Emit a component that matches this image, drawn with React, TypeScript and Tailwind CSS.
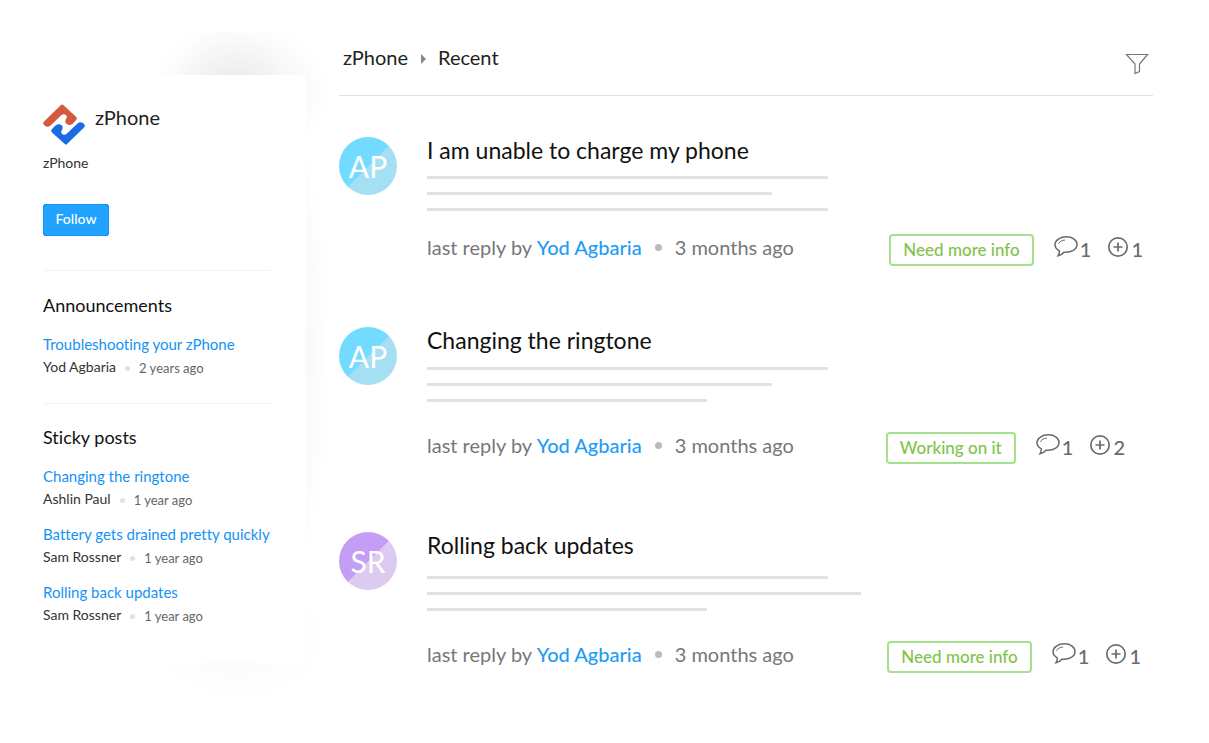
import React from 'react';

interface Post {
  title: string;
  author: string;
  time: string;
}

interface Topic {
  title: string;
  initials: string;
  tone: 'blue' | 'purple';
  lines: string[];
  status: string;
  replies: number;
  votes: number;
  spacing: string;
  lineSpacing: string;
  metaSpacing: string;
  statsSpacing: string;
}

const announcements: Post[] = [
  { title: 'Troubleshooting your zPhone', author: 'Yod Agbaria', time: '2 years ago' },
];

const stickyPosts: Post[] = [
  { title: 'Changing the ringtone', author: 'Ashlin Paul', time: '1 year ago' },
  { title: 'Battery gets drained pretty quickly', author: 'Sam Rossner', time: '1 year ago' },
  { title: 'Rolling back updates', author: 'Sam Rossner', time: '1 year ago' },
];

const topics: Topic[] = [
  {
    title: 'I am unable to charge my phone',
    initials: 'AP',
    tone: 'blue',
    lines: ['w-[401px]', 'w-[345px]', 'w-[401px]'],
    status: 'Need more info',
    replies: 1,
    votes: 1,
    spacing: 'pt-[41px]',
    lineSpacing: 'mt-[13px]',
    metaSpacing: 'mt-[17px]',
    statsSpacing: 'pr-2.5',
  },
  {
    title: 'Changing the ringtone',
    initials: 'AP',
    tone: 'blue',
    lines: ['w-[401px]', 'w-[345px]', 'w-[280px]'],
    status: 'Working on it',
    replies: 1,
    votes: 2,
    spacing: 'pt-[61px]',
    lineSpacing: 'mt-3.5',
    metaSpacing: 'mt-6',
    statsSpacing: 'pr-7',
  },
  {
    title: 'Rolling back updates',
    initials: 'SR',
    tone: 'purple',
    lines: ['w-[401px]', 'w-[434px]', 'w-[280px]'],
    status: 'Need more info',
    replies: 1,
    votes: 1,
    spacing: 'pt-[68px]',
    lineSpacing: 'mt-[18px]',
    metaSpacing: 'mt-6',
    statsSpacing: 'pr-3',
  },
];

const Logo = () => (
  <svg className="h-[42px] w-[42px]" viewBox="0 0 42 42" aria-hidden="true">
    <path
      d="M20 .8 33 12.8Q34.600 14.500 33 16.200L29.500 20Q26 22 23 19.500Q21.500 17 23.500 14Q24.500 11.500 22 10.500Q20 9.500 18 11.500L7.500 21.500Q4.500 24 1.500 21.500Q-.8 19.500 1 17.500L18 1Q19 .2 20 .8Z"
      fill="#d45a3d"
    />
    <path
      d="M22 40.200 9 28.500Q7.400 26.800 9 25L12.500 21.500Q16 19 19 21.500Q20.500 24 18.500 27Q17.500 29.500 20 30.500Q22 31.500 24 29.500L34.500 19.500Q37.500 17 40.500 19.500Q42.800 21.500 41 23.500L24 40Q23 41 22 40.200Z"
      fill="#1b6be5"
    />
  </svg>
);

const FilterIcon = () => (
  <svg className="h-6 w-6" viewBox="0 0 24 24" fill="none" stroke="#777" strokeWidth="1.200" aria-hidden="true">
    <path d="M1.500 2.500H22.500L14.500 12V19.500L10 21.500V12Z" />
  </svg>
);

const CommentIcon = () => (
  <svg className="h-6 w-6" viewBox="0 0 24 24" fill="none" stroke="#6b6b6b" strokeWidth="1.500" aria-hidden="true">
    <path d="M12.500 1.800C6.200 1.800 1 5.200 1 9.600c0 2.800 1.700 4.900 4.300 6.200.2 1.900-.3 3.400-1.300 5 2.500-.5 4.400-1.700 5.900-3.600 7.500.8 13.100-2.900 13.100-7.600 0-4.400-4.300-7.800-10.500-7.800Z" />
    <path d="M4.500 8.800C5.500 6.500 8 5.300 11 5" strokeWidth="1" />
  </svg>
);

const PlusIcon = () => (
  <svg className="h-[22px] w-[22px]" viewBox="0 0 22 22" fill="none" stroke="#6b6b6b" aria-hidden="true">
    <circle cx="11" cy="11" r="9.200" strokeWidth="1.700" />
    <path d="M11 6.500v9M6.500 11h9" strokeWidth="1.700" />
  </svg>
);

const Avatar = ({ initials, tone }: { initials: string; tone: Topic['tone'] }) => {
  const colors =
    tone === 'blue'
      ? 'bg-[linear-gradient(135deg,#72dbff_50%,#a4dff3_51%)]'
      : 'bg-[linear-gradient(135deg,#c49df5_50%,#dccaf0_51%)]';

  return (
    <div className={`flex h-[58px] w-[58px] shrink-0 items-center justify-center rounded-full text-3xl text-white ${colors}`}>
      {initials}
    </div>
  );
};

const PostItem = ({ post }: { post: Post }) => (
  <li>
    <a href="#" className="block text-[15px] leading-6 text-[#1492f5]">
      {post.title}
    </a>
    <div className="flex items-center text-[13px] leading-5">
      <span className="text-[14px] text-[#333]">{post.author}</span>
      <span className="mx-[9px] mt-0.5 h-[5px] w-[5px] rounded-full bg-[#e0e0e0]" />
      <span className="mt-0.5 text-[#666]">{post.time}</span>
    </div>
  </li>
);

const Sidebar = () => (
  <aside className="relative w-[306px] shrink-0 pt-[75px]">
    {/* Soft glow around the panel */}
    <div className="absolute top-8 left-[140px] h-[672px] w-[200px] bg-[radial-gradient(ellipse_90px_72px_at_100px_60px,#00000012,#00000000),radial-gradient(ellipse_104px_330px_at_88px_320px,#0000001a,#00000000),radial-gradient(ellipse_90px_66px_at_100px_606px,#00000006,#00000000)]" />
    <div className="relative bg-white pt-[29px] pr-[35px] pb-[37px] pl-[43px]">
      <div className="flex gap-2.5">
        <Logo />
        <h1 className="text-xl leading-[26px] text-[#222]">zPhone</h1>
      </div>
      <p className="mt-[7px] text-[14px] leading-5 text-[#333]">zPhone</p>
      <button className="mt-[31px] h-8 w-[66px] rounded-xs border border-[#1196f3] bg-[#1fa3ff] pb-[3px] text-[14px] font-medium text-white">
        Follow
      </button>

      <section className="mt-[34px] border-t border-[#f3f3f3] pt-[22px]">
        <h2 className="text-lg leading-6 text-[#111]">Announcements</h2>
        <ul className="mt-[15px]">
          {announcements.map((post) => (
            <PostItem key={post.title} post={post} />
          ))}
        </ul>
      </section>

      <section className="mt-[25px] border-t border-[#f3f3f3] pt-[21px]">
        <h2 className="text-lg leading-6 text-[#111]">Sticky posts</h2>
        <ul className="mt-[15px] space-y-3">
          {stickyPosts.map((post) => (
            <PostItem key={post.title} post={post} />
          ))}
        </ul>
      </section>
    </div>
  </aside>
);

const TopicRow = ({ topic }: { topic: Topic }) => (
  <article className={`flex gap-[30px] ${topic.spacing}`}>
    <Avatar initials={topic.initials} tone={topic.tone} />
    <div className="min-w-0 flex-1">
      <h3 className="text-[23px] leading-[26px] text-[#111]">{topic.title}</h3>
      <div className={`space-y-[13px] ${topic.lineSpacing}`}>
        {topic.lines.map((width, index) => (
          <div key={index} className={`h-[3px] bg-[#e2e2e2] ${width}`} />
        ))}
      </div>
      <div className={`flex items-center justify-between ${topic.metaSpacing}`}>
        <p className="flex items-center text-xl text-[#777]">
          <span>
            last reply by <a href="#" className="font-medium text-[#1e9df7]">Yod Agbaria</a>
          </span>
          <span className="mx-[13px] h-[7px] w-[7px] rounded-full bg-[#bbb]" />
          <span>3 months ago</span>
        </p>
        <div className={`flex items-center text-xl text-[#6b6b6b] ${topic.statsSpacing}`}>
          <span className="mt-1.5 rounded-sm border-2 border-[#a5e08c] px-3 text-[17px] leading-7 font-medium text-[#82c34a]">
            {topic.status}
          </span>
          <button className="ml-5 flex items-center gap-0.5">
            <CommentIcon />
            <span className="mt-1 font-medium">{topic.replies}</span>
          </button>
          <button className="ml-4 flex items-center gap-0.5">
            <PlusIcon />
            <span className="mt-1 font-medium">{topic.votes}</span>
          </button>
        </div>
      </div>
    </div>
  </article>
);

const App: React.FC = () => {
  return (
    <div className="flex min-h-screen bg-white font-['Lato',sans-serif] [font-variant-ligatures:none]">
      <Sidebar />
      <main className="relative min-w-0 flex-1 pr-14 pb-16 pl-[33px]">
        <header className="flex h-24 items-center justify-between border-b border-[#e2e2e2] pt-[18px] pr-1 pl-1">
          <nav className="flex items-center text-xl text-[#222]">
            <a href="#">zPhone</a>
            <svg className="mx-[11px] mt-1 h-2.5 w-2" viewBox="0 0 8 10" fill="#888" aria-hidden="true">
              <path d="M2 0 7 5 2 10Z" />
            </svg>
            <a href="#">Recent</a>
          </nav>
          <button aria-label="Filter" className="mt-3.5">
            <FilterIcon />
          </button>
        </header>
        {topics.map((topic) => (
          <TopicRow key={topic.title} topic={topic} />
        ))}
      </main>
    </div>
  );
};

export default App;
